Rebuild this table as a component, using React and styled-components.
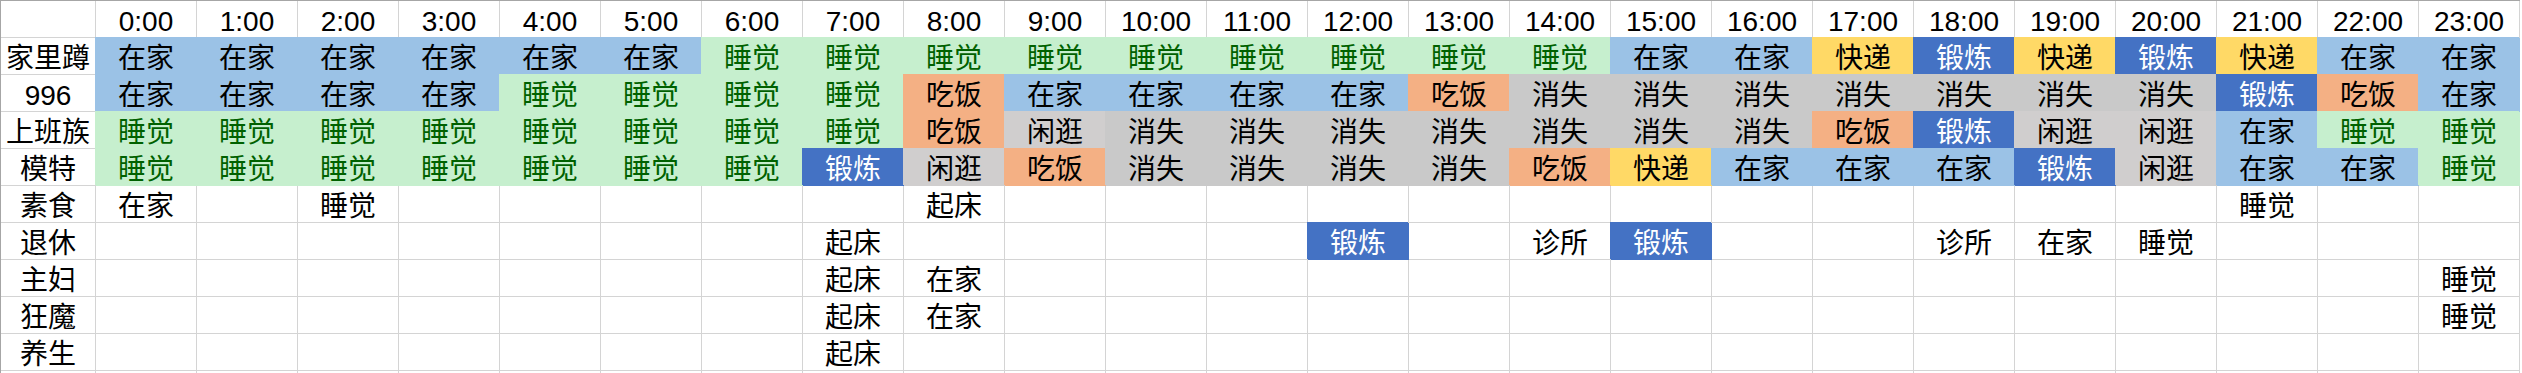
import React from 'react';
import styled, { createGlobalStyle } from 'styled-components';

const Global = createGlobalStyle`
  html, body { margin: 0; padding: 0; background: #fff; overflow: hidden; }
  body { font-family: "Liberation Sans", "Noto Sans CJK SC", sans-serif; }
`;

const FILLS = {
  在家: { bg: '#9BC2E6', fg: '#000' },
  睡觉: { bg: '#C6EFCE', fg: '#006100' },
  吃饭: { bg: '#F4B084', fg: '#000' },
  消失: { bg: '#C9C9C9', fg: '#000' },
  闲逛: { bg: '#D0CECE', fg: '#000' },
  快递: { bg: '#FFD966', fg: '#000' },
  锻炼: { bg: '#4472C4', fg: '#fff' },
};

const CODE = { H: '在家', S: '睡觉', E: '吃饭', X: '消失', G: '闲逛', K: '快递', D: '锻炼' };
const expand = (s) => s.split('').map((c) => CODE[c]);

const filledRows = [
  { label: '家里蹲', cells: expand('HHHHHHSSSSSSSSSHHKDKDKHH') },
  { label: '996', cells: expand('HHHHSSSSEHHHHEXXXXXXXDEH') },
  { label: '上班族', cells: expand('SSSSSSSSEGXXXXXXXEDGGHSS') },
  { label: '模特', cells: expand('SSSSSSSDGEXXXXEKHHHDGHHS') },
];

const sparse = (map) => Array.from({ length: 24 }, (_, i) => map[i] || '');

const plainRows = [
  { label: '素食', cells: sparse({ 0: '在家', 2: '睡觉', 8: '起床', 21: '睡觉' }) },
  { label: '退休', cells: sparse({ 7: '起床', 12: '锻炼*', 14: '诊所', 15: '锻炼*', 18: '诊所', 19: '在家', 20: '睡觉' }) },
  { label: '主妇', cells: sparse({ 7: '起床', 8: '在家', 23: '睡觉' }) },
  { label: '狂魔', cells: sparse({ 7: '起床', 8: '在家', 23: '睡觉' }) },
  { label: '养生', cells: sparse({ 7: '起床' }) },
];

const hours = Array.from({ length: 24 }, (_, i) => `${i}:00`);

const Sheet = styled.div`
  display: grid;
  grid-template-columns: 95px repeat(24, 101px);
  grid-auto-rows: 37px;
  width: max-content;
  border-top: 1px solid #a6a6a6;
  border-left: 1px solid #a6a6a6;
`;

const Cell = styled.div`
  box-sizing: border-box;
  min-width: 0;
  border-right: 1px solid ${(p) => p.$bg || '#d4d4d4'};
  border-bottom: 1px solid ${(p) => p.$bg || '#d4d4d4'};
  background: ${(p) => p.$bg || '#fff'};
  color: ${(p) => p.$fg || '#000'};
  box-shadow: ${(p) => (p.$bg ? `-1px -1px 0 0 ${p.$bg}` : 'none')};
  padding-top: 6px;
  font-size: 28px;
  line-height: 30px;
  text-align: center;
  white-space: nowrap;
  overflow: visible;
`;

const LabelCell = styled(Cell)`
  font-size: 28px;
`;

function DataCell({ value, fill }) {
  let text = value;
  let f = null;
  if (text && text.endsWith('*')) {
    text = text.slice(0, -1);
    f = FILLS[text];
  } else if (fill && text) {
    f = FILLS[text];
  }
  return (
    <Cell $bg={f ? f.bg : undefined} $fg={f ? f.fg : undefined}>
      {text}
    </Cell>
  );
}

export default function App() {
  return (
    <>
      <Global />
      <Sheet>
        <LabelCell />
        {hours.map((h) => (
          <Cell key={h}>{h}</Cell>
        ))}
        {filledRows.map((r) => (
          <React.Fragment key={r.label}>
            <LabelCell>{r.label}</LabelCell>
            {r.cells.map((v, i) => (
              <DataCell key={i} value={v} fill />
            ))}
          </React.Fragment>
        ))}
        {plainRows.map((r) => (
          <React.Fragment key={r.label}>
            <LabelCell>{r.label}</LabelCell>
            {r.cells.map((v, i) => (
              <DataCell key={i} value={v} />
            ))}
          </React.Fragment>
        ))}
        <LabelCell />
        {hours.map((h) => (
          <Cell key={'e' + h} />
        ))}
      </Sheet>
    </>
  );
}
